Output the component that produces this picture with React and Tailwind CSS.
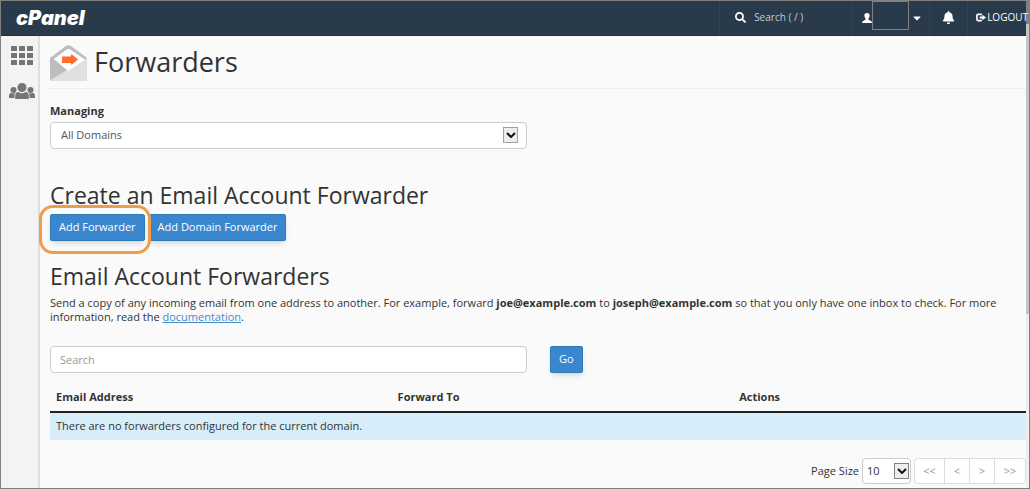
import React, { useState } from 'react'
import { FaSearch, FaBell, FaCaretDown } from 'react-icons/fa'

const ForwarderIcon = () => (
    <svg viewBox="0 0 37 36" className="h-9 w-[37px] shrink-0" aria-hidden="true">
        <path d="M0 13 L16 1 Q18.500 -0.500 21 1 L37 13 V34 Q37 36 35 36 H2 Q0 36 0 34 Z" fill="#bdbdbd" />
        <path d="M4 14 L17 4.500 Q18.500 3.500 20 4.500 L33 14 L18.500 26 Z" fill="#ffffff" />
        <path d="M37 13 V34 Q37 36 35 36 H2 Q1 36 0.500 35 Z" fill="#e0e0e0" />
        <path d="M4 14 L17 4.500 Q18.500 3.500 20 4.500 L35 14.500 L18.500 26 Z" fill="#ffffff" />
        <path d="M12 11.500 H21 V9.500 H22 L28 14.500 L22 19.500 H21 V18 H12 Z" fill="#ff6c2c" />
    </svg>
)

const GridIcon = () => (
    <svg viewBox="0 0 22 19" className="h-[19px] w-[22px]" fill="#757575" aria-hidden="true">
        {[0, 7, 14].map(y => [0, 8, 16].map(x => (
            <rect key={`${x}-${y}`} x={x} y={y} width="6" height="5" rx="0.500" />
        )))}
    </svg>
)

const UsersIcon = () => (
    <svg viewBox="0 0 26 16" className="h-4 w-[26px]" fill="#757575" aria-hidden="true">
        <circle cx="13" cy="4.500" r="4.500" />
        <circle cx="4.500" cy="7" r="3" />
        <circle cx="21.500" cy="7" r="3" />
        <path d="M6.200 16 V13 Q6.500 9.200 9.500 9 Q13 11.500 16.500 9 Q19.500 9.200 19.800 13 V16 Z" />
        <path d="M0 15 V12.500 Q0.300 10 2.300 9.800 Q4.500 11 6.300 9.800 Q5.400 11.500 5.400 15 Z" />
        <path d="M26 15 V12.500 Q25.700 10 23.700 9.800 Q21.500 11 19.700 9.800 Q20.600 11.500 20.600 15 Z" />
    </svg>
)

const UserIcon = () => (
    <svg viewBox="0 0 10 10" className="h-[10px] w-[10px] shrink-0" fill="#ffffff" aria-hidden="true">
        <path d="M5 0 C7 0 7.800 1.300 7.600 3 C7.500 4.300 6.800 5 6.500 5.500 V6.800 C7.500 7.400 10 7.800 10 10 H0 C0 7.800 2.500 7.400 3.500 6.800 V5.500 C3.200 5 2.500 4.300 2.400 3 C2.200 1.300 3 0 5 0 Z" />
    </svg>
)

const LogoutIcon = () => (
    <svg viewBox="0 0 11 9" className="h-[9px] w-[10px] shrink-0" aria-hidden="true">
        <path d="M6.500 1 H2.500 Q1 1 1 2.500 V6.500 Q1 8 2.500 8 H6.500" fill="none" stroke="#ffffff" strokeWidth="1.800" />
        <path d="M4 3.500 H7 V1.500 L11 4.500 L7 7.500 V5.500 H4 Z" fill="#ffffff" />
    </svg>
)

const Chevron = () => (
    <svg viewBox="0 0 10 6" className="h-[6px] w-[10px]" fill="none" stroke="#111111" strokeWidth="2" aria-hidden="true">
        <path d="M1 1 L5 5 L9 1" />
    </svg>
)

const Button = ({ children }) => (
    <button
        type="button"
        className="h-[27px] rounded-xs border border-[#2f7abb] bg-[#3a87cf] px-2 text-white shadow-md"
    >
        {children}
    </button>
)

const pages = [
    { label: "<<", size: "w-[30px]" },
    { label: "<", size: "w-[25px]" },
    { label: ">", size: "w-[25px]" },
    { label: ">>", size: "w-[30px]" },
];

const App = () => {

    const [domain, setDomain] = useState("All Domains");
    const [search, setSearch] = useState("");
    const [pageSize, setPageSize] = useState("10");

    return (
        <div className="relative flex min-h-screen flex-col overflow-hidden border border-[#808080] bg-[#fafafa] font-['Open_Sans',sans-serif] text-[11px] text-[#333333]">
            <div className="absolute inset-y-0 right-0 w-[3px] bg-[#eeeeee]">
                <div className="h-[313px] bg-[#c4c4c4]" />
                <div className="absolute inset-x-0 top-0 h-[23px] bg-[#808080]" />
            </div>

            <header className="relative flex h-[35px] items-stretch justify-between text-[10px] text-white">
                <div className="absolute inset-y-0 right-[3px] left-0 border-b border-[#1f2f3f] bg-[#293a4a]" />
                <a href="#home" className="relative flex items-center pb-[2px] pl-[15px] font-['Inter',sans-serif] text-xl leading-5 font-black italic">cPanel</a>
                <nav className="relative flex items-stretch">
                    <label className="flex w-[133px] items-center gap-2 border-l border-[#304254] pb-[2px] pl-[15px]">
                        <FaSearch className="h-[11px] w-[11px]" />
                        <input type="text" placeholder="Search ( / )" aria-label="Search" className="w-20 placeholder:text-[#c5ccd3]" />
                    </label>
                    <button type="button" aria-label="Account" className="flex w-[77px] items-center border-l border-[#304254] pb-[2px] pl-[9px]">
                        <UserIcon />
                        <span className="h-[29px] w-[37px] shrink-0 self-start border border-[#808080]" />
                        <FaCaretDown className="ml-[3px] h-3 w-[10px]" />
                    </button>
                    <button type="button" aria-label="Notifications" className="flex w-[38px] items-center justify-center border-l border-[#304254] pb-[2px]">
                        <FaBell className="h-[13px] w-[13px]" />
                    </button>
                    <a href="#logout" className="flex items-center gap-px border-l border-[#304254] pr-px pb-[2px] pl-2">
                        <LogoutIcon />
                        LOGOUT
                    </a>
                </nav>
            </header>

            <div className="flex flex-1 pr-[3px]">
                <aside className="flex w-[39px] shrink-0 flex-col items-center gap-[18px] border-r-2 border-[#dedede] bg-[#f3f3f3] pt-[10px] pl-1">
                    <a href="#tools" aria-label="Tools"><GridIcon /></a>
                    <a href="#users" aria-label="Users"><UsersIcon /></a>
                </aside>

                <main className="min-w-0 flex-1 pl-[10px]">
                    <div className="flex h-[53px] items-center gap-[7px] border-b border-[#eeeeee] pt-[2px]">
                        <ForwarderIcon />
                        <h1 className="pb-[2px] text-[27px]">Forwarders</h1>
                    </div>

                    <label htmlFor="domain" className="mt-[14px] block leading-4 font-bold">Managing</label>
                    <div className="relative mt-[3px] w-[477px] max-w-full">
                        <select
                            id="domain"
                            value={domain}
                            onChange={e => setDomain(e.target.value)}
                            className="block h-[27px] w-full appearance-none rounded-sm border border-[#cccccc] bg-white pl-[10px] text-[#555555]"
                        >
                            <option>All Domains</option>
                        </select>
                        <span className="pointer-events-none absolute top-[5px] right-[9px] flex h-4 w-[15px] items-center justify-center border border-[#a0a0a0] bg-[#eeeeee]">
                            <Chevron />
                        </span>
                    </div>

                    <h2 className="mt-[31px] text-[23px] leading-[30px]">Create an Email Account Forwarder</h2>
                    <div className="mt-1 flex gap-1">
                        <span className="relative flex">
                            <Button>Add Forwarder</Button>
                            <span className="pointer-events-none absolute -top-[9px] -right-[6px] -bottom-[13px] -left-[11px] rounded-[14px] border-3 border-[#ee9d4b]" />
                        </span>
                        <Button>Add Domain Forwarder</Button>
                    </div>

                    <h2 className="mt-5 text-[23px] leading-[30px]">Email Account Forwarders</h2>
                    <p className="mt-[5px] leading-[14px]">
                        Send a copy of any incoming email from one address to another. For example, forward <strong>joe@example.com</strong> to <strong>joseph@example.com</strong> so that you only have one inbox to check. For more information, read the <a href="#documentation" className="text-[#428bca] underline">documentation</a>.
                    </p>

                    <div className="mt-[22px] flex gap-[23px]">
                        <input
                            type="text"
                            placeholder="Search"
                            aria-label="Search forwarders"
                            value={search}
                            onChange={e => setSearch(e.target.value)}
                            className="h-[27px] w-[477px] rounded-sm border border-[#cccccc] bg-white px-[9px] placeholder:text-[#999999]"
                        />
                        <Button>Go</Button>
                    </div>

                    <table className="mt-[11px] w-full table-fixed text-left">
                        <thead>
                            <tr className="h-7 border-b-2 border-[#222222]">
                                <th className="w-[35%] px-[6px]">Email Address</th>
                                <th className="w-[35%] px-[6px]">Forward To</th>
                                <th className="px-[6px]">Actions</th>
                            </tr>
                        </thead>
                        <tbody>
                            <tr className="h-7 bg-[#d7edf9]">
                                <td colSpan="3" className="px-[6px]">There are no forwarders configured for the current domain.</td>
                            </tr>
                        </tbody>
                    </table>

                    <div className="mt-[18px] flex items-center justify-end">
                        <label htmlFor="size">Page Size</label>
                        <div className="relative ml-[3px] w-[49px]">
                            <select
                                id="size"
                                value={pageSize}
                                onChange={e => setPageSize(e.target.value)}
                                className="block h-[26px] w-full appearance-none rounded-sm border border-[#cccccc] bg-white pl-1"
                            >
                                <option>10</option>
                                <option>20</option>
                            </select>
                            <span className="pointer-events-none absolute top-[5px] right-[2px] flex h-4 w-[15px] items-center justify-center border border-[#808080] bg-[#eeeeee]">
                                <Chevron />
                            </span>
                        </div>
                        <div className="ml-[3px] flex divide-x divide-[#dddddd] rounded-sm border border-[#dddddd] bg-white text-[#999999]">
                            {pages.map(p => (
                                <button key={p.label} type="button" className={`h-6 ${p.size}`}>{p.label}</button>
                            ))}
                        </div>
                    </div>
                </main>
            </div>
        </div>
    );
}

export default App
